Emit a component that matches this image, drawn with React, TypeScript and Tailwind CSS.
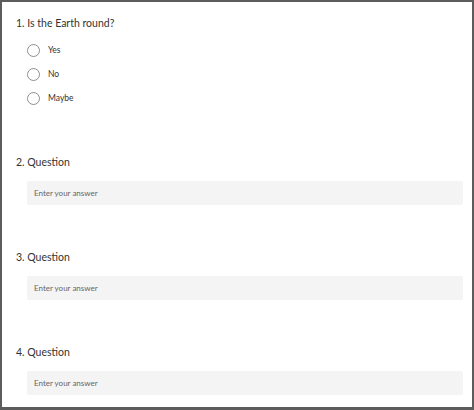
const textQuestions = [2, 3, 4];

function Radio({ label }: { label: string }) {
  return (
    <label className="flex h-6 items-center">
      <span className="ml-[11px] h-[13px] w-[13px] rounded-full border border-[#8f8f8f] bg-white" />
      <span className="ml-2 text-[8.5px] text-[#333]">{label}</span>
    </label>
  );
}

function TextQuestion({ n }: { n: number }) {
  return (
    <div className="mt-[44px]">
      <div className="text-[10.5px] leading-4 text-[#333]">{n}. Question</div>
      <div className="ml-[11px] mr-[9px] mt-[11px] flex h-6 items-center rounded-[2px] bg-[#f4f4f4] px-[7px] text-[8px] text-[#666]">
        Enter your answer
      </div>
    </div>
  );
}

export default function App() {
  return (
    <div
      className="h-[410px] w-[474px] border-b-[3px] border-l-2 border-r-2 border-t-2 border-[#5c5c5c] bg-white pl-[14px] pt-[13px]"
      style={{ fontFamily: 'Lato, "Open Sans", sans-serif' }}
    >
      <div className="text-[10.5px] leading-4 text-[#333]">1. Is the Earth round?</div>
      <div className="mt-[7px] flex flex-col">
        <Radio label="Yes" />
        <Radio label="No" />
        <Radio label="Maybe" />
      </div>
      {textQuestions.map((n) => (
        <TextQuestion key={n} n={n} />
      ))}
    </div>
  );
}
